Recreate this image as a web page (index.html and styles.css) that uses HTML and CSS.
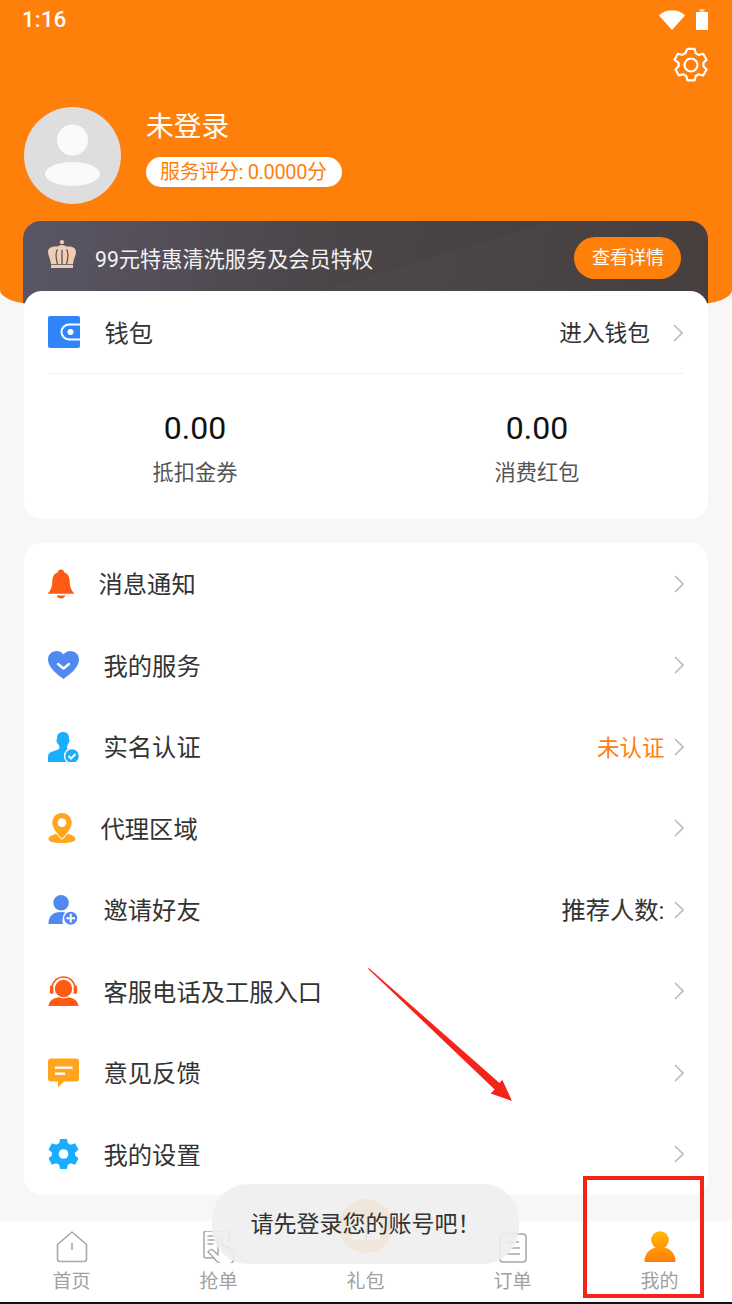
FILE: index.html
```html
<!DOCTYPE html>
<html lang="zh-CN">
<head>
<meta charset="utf-8">
<title>我的</title>
<link rel="stylesheet" href="styles.css">
</head>
<body>
<div class="page">
  <header class="hero">
    <div class="status">
      <span class="time">1:16</span>
      <span class="status-icons">
        <svg class="wifi" viewBox="0 0 26 20"><path d="M0 5.500C3.500 2 8 .3 13 .3S22.500 2 26 5.500L13 20z" fill="#fff"/></svg>
        <svg class="battery" viewBox="0 0 12 21"><path d="M3.500 0h5v3h-5z" fill="#ffc78f"/><rect y="3" width="12" height="18" fill="#fff"/></svg>
      </span>
    </div>
    <div class="gear-row">
      <svg class="gear" viewBox="0 0 36 36" fill="none" stroke="#fff" stroke-width="2.200" stroke-linejoin="round"><path d="M14.500 1.800h7l1.200 4.400 3 1.700 4.400-1.200 3.500 6-3.200 3.200v3.400l3.200 3.200-3.500 6-4.400-1.200-3 1.700-1.200 4.400h-7l-1.200-4.400-3-1.700-4.400 1.200-3.500-6 3.200-3.200v-3.400L1.400 12.700l3.500-6 4.400 1.200 3-1.700z"/><circle cx="18" cy="18" r="6.500"/></svg>
    </div>
    <div class="profile">
      <svg class="avatar" viewBox="0 0 97 97"><circle cx="48.500" cy="48.500" r="48.500" fill="#dedede"/><ellipse cx="48.500" cy="33" rx="15.500" ry="15.500" fill="#fafafa"/><ellipse cx="48.500" cy="67" rx="27.500" ry="12" fill="#fafafa"/></svg>
      <div class="who">
        <div class="name">未登录</div>
        <div class="score">服务评分: 0.0000分</div>
      </div>
    </div>
    <div class="vip">
      <svg class="crown" viewBox="0 0 28 28"><circle cx="14" cy="2.200" r="2.100" fill="#f0cdb0"/><path d="M14 5c2 0 3 1 5 1.500C23 6 28 7 28 12c0 3-2.500 7-3 12H3C2.500 19 0 15 0 12c0-5 5-6 9-5.500C11 6 12 5 14 5z" fill="#f0cdb0"/><path d="M9.500 9.500c-2.500 3-1.500 9 0 14.500M18.500 9.500c2.500 3 1.500 9 0 14.500M14 10v14" stroke="#5a5564" stroke-width="1.300" fill="none"/><rect x="3" y="24.800" width="22" height="3.200" fill="#f0cdb0"/></svg>
      <span class="vip-text">99元特惠清洗服务及会员特权</span>
      <span class="vip-btn">查看详情</span>
    </div>
  </header>

  <main class="content">
    <section class="card wallet">
      <div class="wallet-row">
        <svg class="icon-wallet" viewBox="0 0 32 32"><rect width="32" height="32" rx="2" fill="#2f86fb"/><path d="M32 8.500H21a7.500 7.500 0 0 0 0 15h11" fill="none" stroke="#fff" stroke-width="2"/><circle cx="22.500" cy="16" r="3" fill="#fff"/></svg>
        <span class="label wallet-label">钱包</span>
        <span class="wallet-enter">进入钱包</span>
        <svg class="chev" viewBox="0 0 10 18"><path d="M1 1l8 8-8 8" fill="none" stroke="#bbb" stroke-width="1.600"/></svg>
      </div>
      <div class="stats">
        <div class="stat"><div class="num">0.00</div><div class="cap">抵扣金券</div></div>
        <div class="stat"><div class="num">0.00</div><div class="cap">消费红包</div></div>
      </div>
    </section>

    <section class="card menu">
      <div class="row">
        <svg class="ic w26" viewBox="0 0 27 30"><path d="M13.500 0c2 0 3 1.300 3.200 2.700C20.500 4 22.500 7.500 22.500 12c0 5 1 9 4.500 12.500V25H0v-.5C3.500 21 4.500 17 4.500 12c0-4.500 2-8 5.800-9.300C10.500 1.300 11.500 0 13.500 0z" fill="#ff5a14"/><path d="M9 27h9c-.5 2-2.500 3-4.500 3S9.500 29 9 27z" fill="#ff5a14"/></svg>
        <span class="label">消息通知</span><span class="right"></span>
        <svg class="chev" viewBox="0 0 10 18"><path d="M1 1l8 8-8 8" fill="none" stroke="#bbb" stroke-width="1.600"/></svg>
      </div>
      <div class="row">
        <svg class="ic" viewBox="0 0 31 28"><path d="M15.500 28C10 24 0 17 0 8.500 0 3.500 4 0 8.500 0c3 0 5.500 1.300 7 3.500C17 1.300 19.500 0 22.500 0 27 0 31 3.500 31 8.500 31 17 21 24 15.500 28z" fill="#5089ef"/><path d="M10 13l5.500 4.500L21 13" fill="none" stroke="#fff" stroke-width="2.400" stroke-linecap="round" stroke-linejoin="round"/></svg>
        <span class="label">我的服务</span><span class="right"></span>
        <svg class="chev" viewBox="0 0 10 18"><path d="M1 1l8 8-8 8" fill="none" stroke="#bbb" stroke-width="1.600"/></svg>
      </div>
      <div class="row">
        <svg class="ic" viewBox="0 0 31 30"><path d="M15 0c4 0 6 2.500 6 6 0 1 .5 1.500.5 3s-1 2-1.500 3c-.5 1.500-1 3-1 4 0 .5 1 1 3 2-2.500 1.500-3.500 4-3 8l1 4H0v-5c0-4 3-5 6-6 3-1 5-1.500 5.500-3 0-1-.5-2.500-1.500-4-.5-1-1.500-1.500-1.500-3s.5-2 .5-3c0-3.500 2-6 6-6z" fill="#1aaeff"/><circle cx="24" cy="24" r="7.500" fill="#1aaeff" stroke="#fff" stroke-width="1.400"/><path d="M20.500 24l2.500 2.500 4.500-4.500" fill="none" stroke="#fff" stroke-width="2"/></svg>
        <span class="label">实名认证</span><span class="right orange">未认证</span>
        <svg class="chev" viewBox="0 0 10 18"><path d="M1 1l8 8-8 8" fill="none" stroke="#bbb" stroke-width="1.600"/></svg>
      </div>
      <div class="row">
        <svg class="ic w28" viewBox="0 0 28 31"><path d="M8 21.500C3.500 23 0 24.500 0 27c0 2.500 6 4 14 4s14-1.500 14-4c0-2.500-3.500-4-8-5.500L14 28z" fill="#ffa61e"/><path d="M14 0C8 0 4 4.500 4 10c0 6 6 12 10 16.500C18 22 24 16 24 10 24 4.500 20 0 14 0z" fill="#ffa61e"/><circle cx="14" cy="10" r="4.500" fill="#fff"/></svg>
        <span class="label">代理区域</span><span class="right"></span>
        <svg class="chev" viewBox="0 0 10 18"><path d="M1 1l8 8-8 8" fill="none" stroke="#bbb" stroke-width="1.600"/></svg>
      </div>
      <div class="row">
        <svg class="ic" viewBox="0 0 31 31"><circle cx="13" cy="8" r="8" fill="#5089ef"/><path d="M0 30c0-8 4-12.500 13-12.500 3 0 5 .5 7 2-5 2-6.500 6-5 10.500H0z" fill="#5089ef"/><circle cx="23" cy="24" r="7.500" fill="#5089ef" stroke="#fff" stroke-width="1.500"/><path d="M18.500 24h9M23 19.500v9" stroke="#fff" stroke-width="2"/></svg>
        <span class="label">邀请好友</span><span class="right big">推荐人数:</span>
        <svg class="chev" viewBox="0 0 10 18"><path d="M1 1l8 8-8 8" fill="none" stroke="#bbb" stroke-width="1.600"/></svg>
      </div>
      <div class="row">
        <svg class="ic" viewBox="0 0 31 31"><path d="M3.500 14C3.500 6 9 1 15.500 1S27.500 6 27.500 14" fill="none" stroke="#ff5a14" stroke-width="1.600"/><rect x="1.500" y="9.500" width="3.500" height="9" rx="1.700" fill="#ff5a14"/><rect x="26" y="9.500" width="3.500" height="9" rx="1.700" fill="#ff5a14"/><circle cx="15.500" cy="13" r="9" fill="#ff5a14"/><path d="M0 31c1-5.500 4.500-8 10.500-9 3 1.500 7 1.500 10 0 6 1 9.500 3.500 10.500 9z" fill="#ff5a14"/></svg>
        <span class="label">客服电话及工服入口</span><span class="right"></span>
        <svg class="chev" viewBox="0 0 10 18"><path d="M1 1l8 8-8 8" fill="none" stroke="#bbb" stroke-width="1.600"/></svg>
      </div>
      <div class="row">
        <svg class="ic" viewBox="0 0 31 29"><path d="M3 0h25a3 3 0 0 1 3 3v17a3 3 0 0 1-3 3H16l-6 6v-6H3a3 3 0 0 1-3-3V3a3 3 0 0 1 3-3z" fill="#ffa61e"/><rect x="7" y="8" width="17.500" height="2.400" fill="#fff"/><rect x="7" y="14" width="10" height="2.400" fill="#fff"/></svg>
        <span class="label">意见反馈</span><span class="right"></span>
        <svg class="chev" viewBox="0 0 10 18"><path d="M1 1l8 8-8 8" fill="none" stroke="#bbb" stroke-width="1.600"/></svg>
      </div>
      <div class="row">
        <svg class="ic" viewBox="0 0 31 31"><path d="M12 0h7l1 4.500 3 1.500 4.500-1.500L31 11l-3.500 3v3l3.500 3-3.500 6.500-4.500-1.500-3 1.500-1 4.500h-7l-1-4.500L8 25l-4.500 1.500L0 20l3.500-3v-3L0 11l3.500-6.500L8 6l3-1.500z" fill="#1aaeff"/><circle cx="15.500" cy="15.500" r="5" fill="#fff"/></svg>
        <span class="label">我的设置</span><span class="right"></span>
        <svg class="chev" viewBox="0 0 10 18"><path d="M1 1l8 8-8 8" fill="none" stroke="#bbb" stroke-width="1.600"/></svg>
      </div>
    </section>
  </main>

  <nav class="tabs">
    <div class="tab">
      <svg class="tab-ic" viewBox="0 0 32 32" fill="none" stroke="#a8a8a8" stroke-width="1.600" stroke-linejoin="round"><path d="M1.500 13.500L16 1l14.500 12.500V28a2.500 2.500 0 0 1-2.500 2.500H4A2.500 2.500 0 0 1 1.500 28z"/><path d="M16 12v7"/></svg>
      <span>首页</span>
    </div>
    <div class="tab">
      <svg class="tab-ic" viewBox="0 0 32 32" fill="none" stroke="#a8a8a8" stroke-width="1.500" stroke-linecap="round" stroke-linejoin="round"><path d="M11 27H3a2 2 0 0 1-2-2V2a2 2 0 0 1 2-2h21a2 2 0 0 1 2 2v9"/><path d="M5 5h9M5 9h7M5 13h5"/><path d="M5 21c2-3 4-3 6-1l4 4V9a2 2 0 0 1 4 0v7a2 2 0 0 1 4 0v2a2 2 0 0 1 4 0v2a2 2 0 0 1 4 0v6c0 4-2 7-6 7h-6c-5 0-8-7-14-12z"/></svg>
      <span>抢单</span>
    </div>
    <div class="tab">
      <svg class="gift" viewBox="0 0 54 54"><circle cx="27" cy="27" r="27" fill="#ff9a1f"/><path d="M13 24c4-1.500 9-1 13 1v17c-4-2-9-2.500-13-1zM41 24c-4-1.500-9-1-13 1v17c4-2 9-2.500 13-1z" fill="#fff"/></svg>
      <span class="gift-label">礼包</span>
    </div>
    <div class="tab">
      <svg class="tab-ic" viewBox="0 0 32 32" fill="none" stroke="#a8a8a8" stroke-width="1.600"><rect x="3" y="3" width="26" height="28" rx="3"/><path d="M11 1.500h10M10 11h12M14 17h9M9 23h14" /></svg>
      <span>订单</span>
    </div>
    <div class="tab">
      <svg class="tab-ic" viewBox="0 0 32 32"><defs><linearGradient id="me" gradientUnits="userSpaceOnUse" x1="0" y1="0" x2="0" y2="31"><stop offset="0" stop-color="#ffb800"/><stop offset="1" stop-color="#ff7e0a"/></linearGradient></defs><circle cx="16" cy="9" r="8.800" fill="url(#me)"/><path d="M.5 30c0-8 6.500-14 15.500-14s15.500 6 15.500 14c0 .6-.4 1-1 1h-29c-.6 0-1-.4-1-1z" fill="url(#me)"/></svg>
      <span>我的</span>
    </div>
  </nav>

  <div class="toast">请先登录您的账号吧！</div>
  <svg class="arrow" viewBox="0 0 150 140"><path d="M0 .8L.8 0 131.500 115l2.800-3.300 9.700 21.300-21.300-7.600 4-4z" fill="#f5231a"/></svg>
  <div class="mark"></div>
</div>
</body>
</html>
```

FILE: styles.css
```css
* { box-sizing: border-box; }
html, body { margin: 0; padding: 0; }
body {
  font-family: Roboto, "Noto Sans CJK SC", sans-serif;
  color: #333;
  background: #f7f7f7;
}
svg { display: block; flex: none; }
.page {
  position: relative;
  width: 732px;
  height: 1304px;
  overflow: hidden;
  display: flex;
  flex-direction: column;
  background: #f7f7f7;
}
.hero {
  height: 304px;
  flex: none;
  background: #ff7f0b;
  border-radius: 0 0 36px 36px / 0 0 14px 14px;
  padding: 0 24px;
  color: #fff;
  overflow: hidden;
}
.status {
  height: 38px;
  display: flex;
  justify-content: space-between;
  align-items: center;
  margin-left: -2px;
}
.time { font-size: 22px; font-weight: 500; letter-spacing: .3px; }
.status-icons { display: flex; align-items: center; gap: 11px; }
.wifi { width: 26px; height: 20px; margin-top: 1px; }
.battery { width: 12px; height: 21px; }
.gear-row { display: flex; justify-content: flex-end; margin-top: 9px; height: 36px; }
.gear { width: 36px; height: 36px; margin-right: -1px; }
.profile { display: flex; align-items: flex-start; gap: 25px; margin-top: 24px; }
.avatar { width: 97px; height: 97px; }
.who { display: flex; flex-direction: column; align-items: flex-start; }
.name { font-size: 27.700px; line-height: 40px; }
.score {
  margin-top: 10px;
  height: 30px;
  line-height: 30px;
  padding: 0 15px 0 14px;
  border-radius: 15px;
  background: #fff;
  color: #ff7f0b;
  font-size: 20px;
  letter-spacing: -.35px;
}
.vip {
  margin-top: 17px;
  height: 90px;
  margin-left: -1px;
  border-radius: 18px 18px 0 0;
  background:
    linear-gradient(163deg, transparent 54%, rgba(255, 255, 255, .015) 54%),
    linear-gradient(100deg, #5b5666 0%, #4a4548 45%, #433c3b 100%);
  display: flex;
  align-items: flex-start;
  padding: 16px 27px 0 25px;
}
.crown { width: 28px; height: 28px; margin-top: 3px; }
.vip-text { margin: 8px 0 0 19px; font-size: 21.200px; line-height: 30px; color: #f2f2f2; }
.vip-btn {
  margin-left: auto;
  width: 107px;
  height: 42px;
  line-height: 42px;
  padding-left: 1px;
  border-radius: 21px;
  background: #ff7f0b;
  color: #fff;
  font-size: 18px;
  text-align: center;
}
.content {
  position: relative;
  margin-top: -13px;
  padding: 0 24px;
  display: flex;
  flex-direction: column;
  gap: 24px;
  flex: none;
}
.card { background: #fff; border-radius: 18px; }
.wallet { height: 228px; }
.wallet-row {
  height: 83px;
  margin: 0 25px 0 24px;
  border-bottom: 1px solid #f0f0f0;
  display: flex;
  align-items: center;
}
.icon-wallet { width: 32px; height: 32px; margin-right: 24.500px; }
.label { font-size: 24.300px; color: #333; white-space: nowrap; margin-top: -2px; }
.wallet-enter { margin-left: auto; margin-right: 23px; margin-top: -2px; font-size: 22.700px; color: #333; }
.chev { width: 10px; height: 18px; }
.wallet-row .chev { margin-top: 1px; }
.stats { display: flex; margin-top: 33px; }
.stat { flex: 1; text-align: center; }
.num { font-size: 32px; line-height: 42px; color: #111; }
.cap { margin-top: 9px; font-size: 21.200px; line-height: 30px; color: #555; }
.menu { height: 652px; }
.row {
  height: 81.500px;
  padding: 0 24px;
  display: flex;
  align-items: center;
  gap: 24.500px;
}
.ic { width: 31px; height: 30px; }
.w26 { width: 26px; }
.w28 { width: 28px; }
.right { margin-left: auto; margin-right: -15px; margin-top: -2px; font-size: 22.500px; color: #333; }
.big { font-size: 24.300px; }
.orange { color: #ff7f0b; }
.tabs {
  margin: auto -1px 0 -2px;
  height: 83px;
  flex: none;
  background: #fff;
  border-bottom: 2px solid #111;
  display: grid;
  grid-template-columns: repeat(5, 1fr);
  position: relative;
}
.tab {
  position: relative;
  display: flex;
  flex-direction: column;
  align-items: center;
  padding-top: 10px;
  font-size: 19px;
  line-height: 28px;
  color: #a0a0a0;
}
.tab-ic { width: 32px; height: 32px; margin-bottom: 5px; }
.gift { position: absolute; top: -22px; left: 50%; margin-left: -27px; width: 54px; height: 54px; }
.gift-label { margin-top: 37px; }
.toast {
  position: absolute;
  left: 212px;
  top: 1184px;
  width: 307px;
  height: 80px;
  border-radius: 36px;
  background: rgba(238, 238, 238, .9);
  color: #333;
  font-size: 23px;
  line-height: 82px;
  text-align: center;
}
.arrow { position: absolute; left: 368px; top: 968px; width: 150px; height: 140px; overflow: visible; }
.mark {
  position: absolute;
  left: 583px;
  top: 1176px;
  width: 121px;
  height: 122px;
  border: 4px solid #f5231a;
}
```
